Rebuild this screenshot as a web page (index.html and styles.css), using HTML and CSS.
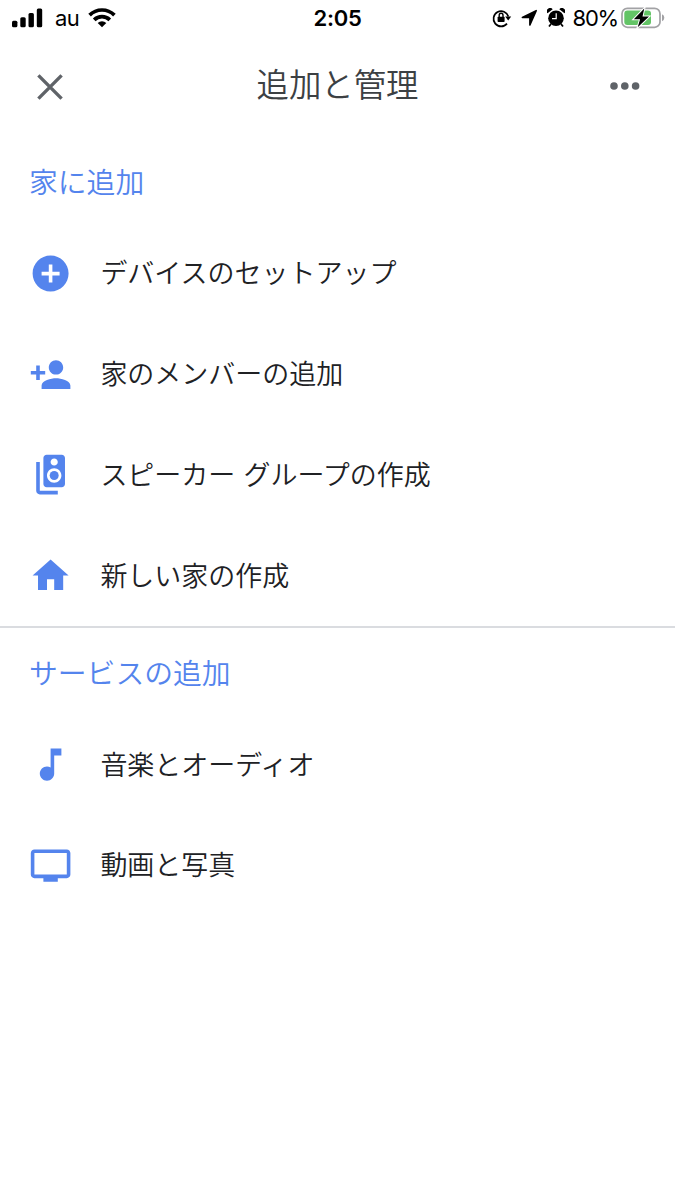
FILE: index.html
```html
<!DOCTYPE html>
<html lang="ja">
<head>
<meta charset="utf-8">
<title>追加と管理</title>
<link rel="stylesheet" href="styles.css">
</head>
<body>
<div class="status">
  <div class="status-left">
    <svg class="signal" width="31" height="20" viewBox="0 0 31 20"><rect x="0" y="12.8" width="5.4" height="6.4" rx="1.5"/><rect x="8.3" y="9.2" width="5.4" height="10" rx="1.5"/><rect x="16.5" y="5" width="5.4" height="14.2" rx="1.5"/><rect x="24.8" y="0.5" width="5.4" height="18.7" rx="1.5"/></svg>
    <span class="carrier">au</span>
    <svg class="wifi" width="28" height="20" viewBox="0 0 28 20"><g fill="none" stroke="#000" stroke-width="3.7"><path d="M1.6 7.1a17.6 17.6 0 0 1 24.8 0"/><path d="M6.2 11.9a11.1 11.1 0 0 1 15.6 0"/></g><path d="M9.7 15.1a6.2 6.2 0 0 1 8.6 0L14 19.3z"/></svg>
  </div>
  <span class="time">2:05</span>
  <div class="status-right">
    <svg class="lock" width="20" height="20" viewBox="0 0 20 20"><path d="M15 15.6A7.6 7.6 0 1 1 16.4 8.6" fill="none" stroke="#000" stroke-width="1.7"/><path d="M13.2 8.4h6l-3 4z"/><rect x="5.6" y="8.8" width="7" height="5.2" rx=".7"/><path d="M7.2 9V7.2a1.9 1.9 0 0 1 3.8 0V9" fill="none" stroke="#000" stroke-width="1.4"/></svg>
    <svg class="arrow" width="17" height="18" viewBox="0 0 17 18"><path d="M15.2 1.7 8.9 15.9V8.5H1.4z" stroke="#000" stroke-width="1.6" stroke-linejoin="round"/></svg>
    <svg class="alarm" width="18" height="20" viewBox="0 0 18 20"><circle cx="9" cy="10.2" r="7.8"/><path d="M.5 5.3A3.2 3.2 0 0 1 5.7 1.3zM17.5 5.3A3.2 3.2 0 0 0 12.3 1.3z"/><path d="M4 16l-2 2.5M14 16l2 2.5" stroke="#000" stroke-width="1.8"/><path d="M9.2 5.3v5.3H5" fill="none" stroke="#fff" stroke-width="1.2"/></svg>
    <span class="percent">80%</span>
    <svg class="battery" width="44" height="24" viewBox="0 0 44 24"><rect x="1" y="2.3" width="38" height="19" rx="5.4" fill="none" stroke="#a2a2a5" stroke-width="1.7"/><path d="M41 8.3q2.3 1 2.3 3.4T41 15.2z" fill="#a2a2a5"/><rect x="3.3" y="4.6" width="26.7" height="14.4" rx="3" fill="#63c466"/><path d="M23.3 2.5 12.8 13.2h6.3L16.7 21.3 28 10.4h-6.5z" stroke="#fff" stroke-width="2" paint-order="stroke"/></svg>
  </div>
</div>
<header class="bar">
  <svg class="close" width="26" height="26" viewBox="0 0 26 26"><path d="M1.4 1.4l23.2 23.2M24.6 1.4L1.4 24.6"/></svg>
  <h1 class="title">追加と管理</h1>
  <svg class="more" width="30" height="8" viewBox="0 0 30 8"><circle cx="4" cy="4" r="3.8"/><circle cx="14.8" cy="4" r="3.8"/><circle cx="25.6" cy="4" r="3.8"/></svg>
</header>
<main>
  <section class="group">
    <h2 class="heading">家に追加</h2>
    <div class="row"><svg class="icon" viewBox="0 0 24 24"><path d="M12 2C6.48 2 2 6.48 2 12s4.48 10 10 10 10-4.48 10-10S17.52 2 12 2zm5 11h-4v4h-2v-4H7v-2h4V7h2v4h4v2z"/></svg><span class="label">デバイスのセットアップ</span></div>
    <div class="row"><svg class="icon" viewBox="0 0 24 24"><path d="M15 12c2.21 0 4-1.79 4-4s-1.79-4-4-4-4 1.79-4 4 1.79 4 4 4zm-9-2V7H4v3H1v2h3v3h2v-3h3v-2H6zm9 4c-2.67 0-8 1.34-8 4v2h16v-2c0-2.66-5.33-4-8-4z"/></svg><span class="label">家のメンバーの追加</span></div>
    <div class="row"><svg class="icon" viewBox="0 0 24 24"><path d="M18.2 1H9.8C8.81 1 8 1.81 8 2.8v14.4c0 .99.81 1.79 1.8 1.79l8.4.01c.99 0 1.8-.81 1.8-1.8V2.8c0-.99-.81-1.8-1.8-1.8zM14 3c1.1 0 2 .89 2 2s-.9 2-2 2-2-.89-2-2 .9-2 2-2zm0 13.5c-2.21 0-4-1.79-4-4s1.79-4 4-4 4 1.79 4 4-1.79 4-4 4z"/><circle cx="14" cy="12.5" r="2.5"/><path d="M6 5H4v16c0 1.1.89 2 2 2h10v-2H6V5z"/></svg><span class="label">スピーカー グループの作成</span></div>
    <div class="row"><svg class="icon" viewBox="0 0 24 24"><path d="M10 20v-6h4v6h5v-8h3L12 3 2 12h3v8z"/></svg><span class="label">新しい家の作成</span></div>
  </section>
  <section class="group">
    <h2 class="heading">サービスの追加</h2>
    <div class="row"><svg class="icon" viewBox="0 0 24 24"><path d="M12 3v10.55c-.59-.34-1.27-.55-2-.55-2.21 0-4 1.79-4 4s1.79 4 4 4 4-1.79 4-4V7h4V3h-6z"/></svg><span class="label">音楽とオーディオ</span></div>
    <div class="row"><svg class="icon" viewBox="0 0 24 24"><path d="M21 3H3c-1.1 0-2 .9-2 2v12c0 1.1.9 2 2 2h5v2h8v-2h5c1.1 0 2-.9 2-2V5c0-1.1-.9-2-2-2zm0 14H3V5h18v12z"/></svg><span class="label">動画と写真</span></div>
  </section>
</main>
</body>
</html>
```
FILE: styles.css
```css
* { box-sizing: border-box; }
body {
  margin: 0;
  height: 1200px;
  background: #fff;
  color: #202124;
  font-family: "Noto Sans CJK JP", sans-serif;
  font-weight: 350;
}
svg { display: block; flex: none; }
.status {
  height: 36px;
  padding: 0 10px 0 12px;
  display: grid;
  grid-template-columns: 1fr auto 1fr;
  align-items: center;
  color: #000;
  font-family: Inter, "Liberation Sans", sans-serif;
  font-weight: 400;
  font-size: 22px;
  line-height: 36px;
}
.status-left, .status-right { display: flex; align-items: center; }
.status-right { justify-content: flex-end; }
.carrier { margin-left: 12px; letter-spacing: -.5px; }
.wifi { margin-left: 9px; }
.time { padding-right: 2px; font-weight: 600; letter-spacing: -.3px; }
.arrow { margin-left: 9px; }
.alarm { margin-left: 9px; }
.percent { margin-left: 8px; letter-spacing: -1.2px; }
.battery { margin-left: 3px; }
.bar {
  height: 101px;
  padding: 0 35px;
  display: grid;
  grid-template-columns: 1fr auto 1fr;
  align-items: center;
}
.close { margin-left: 2px; fill: none; stroke: #5f6368; stroke-width: 3.4; }
.title {
  margin: 0;
  padding-bottom: 8px;
  color: #3c4043;
  font-size: 32.4px;
  font-weight: 350;
  line-height: 48px;
}
.more { justify-self: end; margin-bottom: 1px; fill: #5f6368; }
.group { color: #5484ed; }
.group + .group { border-top: 2px solid #dadce0; }
.heading {
  margin: 0;
  height: 86px;
  padding: 23px 0 0 29px;
  font-size: 28.8px;
  font-weight: 350;
  line-height: 42px;
}
.row {
  height: 100.8px;
  padding-left: 28.8px;
  display: flex;
  align-items: center;
  gap: 28.4px;
}
.icon { width: 43.2px; height: 43.2px; fill: #5484ed; }
.label { padding-bottom: 2px; color: #202124; font-size: 27px; line-height: 40px; word-spacing: 2px; }
```
